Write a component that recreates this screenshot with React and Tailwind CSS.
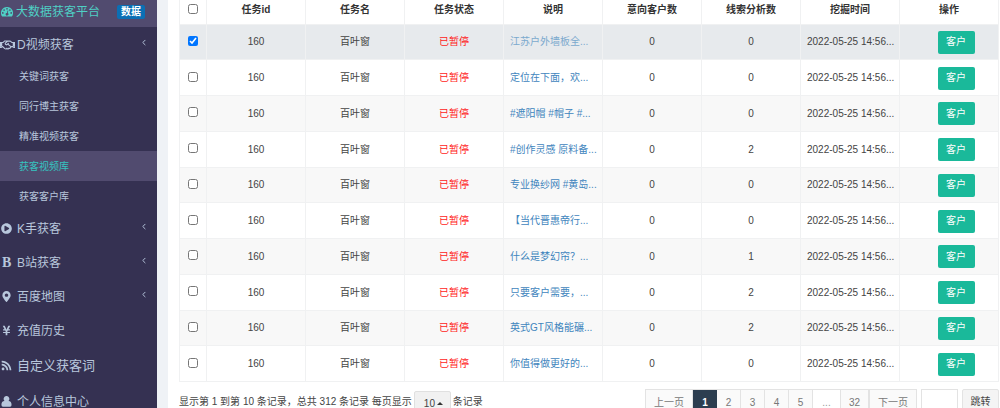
import React from 'react';
import { FaRegHandshake, FaPlayCircle, FaMapMarkerAlt, FaYenSign, FaRss } from 'react-icons/fa';

function GaugeIcon() {
    return (
        <svg viewBox="0 0 24 20" className="h-[10px] w-3" fill="currentColor">
            <path
                fillRule="evenodd"
                d="M12 0A12 12 0 0 0 1.9 18.5Q2.2 19 2.8 19H21.2Q21.8 19 22.1 18.5A12 12 0 0 0 12 0ZM3.6 10.2a1.7 1.7 0 1 1 0 3.4a1.7 1.7 0 0 1 0-3.4ZM6.2 4.3a1.7 1.7 0 1 1 0 3.4a1.7 1.7 0 0 1 0-3.4ZM12 1.8a1.7 1.7 0 1 1 0 3.4a1.7 1.7 0 0 1 0-3.4ZM17.8 4.3a1.7 1.7 0 1 1 0 3.4a1.7 1.7 0 0 1 0-3.4ZM20.4 10.2a1.7 1.7 0 1 1 0 3.4a1.7 1.7 0 0 1 0-3.4ZM13.2 6.8L14.7 7.2L13.5 12.2A2.7 2.7 0 1 1 11.8 11.8Z"
            />
        </svg>
    );
}

function UserIcon({ className }) {
    return (
        <svg viewBox="0 0 20 20" className={className} fill="currentColor">
            <path d="M10 0a5 5.4 0 0 1 3.6 9.3C17.5 9.6 19.2 12 19.2 16.2Q19.2 19.4 16.4 19.4H3.6Q.8 19.4 .8 16.2C.8 12 2.5 9.6 6.4 9.3A5 5.4 0 0 1 10 0Z" />
        </svg>
    );
}

function BoldIcon() {
    return <span className="ml-[2px] font-['Liberation_Serif',serif] text-sm font-bold">B</span>;
}

const menu = [
    {
        label: 'D视频获客',
        icon: FaRegHandshake,
        wide: true,
        arrow: true,
        children: ['关键词获客', '同行博主获客', '精准视频获客', '获客视频库', '获客客户库'],
    },
    { label: 'K手获客', icon: FaPlayCircle, arrow: true },
    { label: 'B站获客', icon: BoldIcon, arrow: true },
    { label: '百度地图', icon: FaMapMarkerAlt, arrow: true },
    { label: '充值历史', icon: FaYenSign },
    { label: '自定义获客词', icon: FaRss, large: true },
    { label: '个人信息中心', icon: UserIcon },
];

const columns = ['任务id', '任务名', '任务状态', '说明', '意向客户数', '线索分析数', '挖掘时间', '操作'];

const rows = [
    { desc: '江苏户外墙板全...', clues: 0, selected: true },
    { desc: '定位在下面，欢...', clues: 0 },
    { desc: '#遮阳帽 #帽子 #...', clues: 0 },
    { desc: '#创作灵感 原料备...', clues: 2 },
    { desc: '专业换纱网 #黄岛...', clues: 0 },
    { desc: '【当代晋惠帝行...', clues: 0 },
    { desc: '什么是梦幻帘？...', clues: 1 },
    { desc: '只要客户需要，...', clues: 2 },
    { desc: '英式GT风格能碾...', clues: 2 },
    { desc: '你值得做更好的...', clues: 0 },
];

const pages = ['上一页', '1', '2', '3', '4', '5', '...', '32', '下一页'];

function Sidebar() {
    return (
        <nav className="w-[157px] shrink-0 bg-[#353152] text-xs text-[#b8c7dc]">
            <a href="#" className="flex h-[27px] items-center bg-[#514b6f] pb-1 text-[#4fd0c5]">
                <span className="flex w-4 shrink-0 pl-px">
                    <GaugeIcon />
                </span>
                <span className="flex-1">大数据获客平台</span>
                <span className="mr-3 rounded-xs bg-[#0b6fb4] px-1 text-[10px] leading-[14px] font-bold text-white">数据</span>
            </a>
            {menu.map((item) => (
                <div key={item.label}>
                    <a href="#" className={item.large ? 'flex h-[37px] items-center text-[13px]' : 'flex h-[34px] items-center pt-px'}>
                        <span className="flex w-[17px] shrink-0 items-center">
                            <item.icon className={item.wide ? 'h-3 w-[15px]' : 'ml-px size-[11px]'} />
                        </span>
                        <span className="flex-1">{item.label}</span>
                        {item.arrow && (
                            <svg viewBox="0 0 5 8" className="mr-[11px] mb-1 h-[7px] w-[4px]" fill="none" stroke="currentColor">
                                <path d="M4.2 0.8L1 4L4.2 7.2" strokeWidth="1.2" />
                            </svg>
                        )}
                    </a>
                    {item.children?.map((child) => (
                        <a
                            key={child}
                            href="#"
                            className={
                                child === '获客视频库'
                                    ? 'flex h-[30px] items-center bg-[#514b6f] pt-px pl-[19px] text-[10px] text-[#35c4c0]'
                                    : 'flex h-[30px] items-center pt-px pl-[19px] text-[10px]'
                            }
                        >
                            {child}
                        </a>
                    ))}
                </div>
            ))}
        </nav>
    );
}

function TaskTable() {
    return (
        <table className="h-[382px] w-full table-fixed border-collapse text-center text-[10px] leading-4 text-[#444]">
            <thead>
                <tr className="h-6 text-[#333]">
                    <th className="w-[27px] border border-t-0 border-[#f0f1f2] pb-[6px] align-middle">
                        <input type="checkbox" aria-label="全选" className="mx-auto block size-[10px]" />
                    </th>
                    {columns.map((name) => (
                        <th key={name} className="border border-t-0 border-[#f0f1f2] pb-1 font-bold">{name}</th>
                    ))}
                </tr>
            </thead>
            <tbody>
                {rows.map((row, i) => (
                    <tr key={i} className={row.selected ? 'bg-[#e7eaed]' : i % 2 === 0 ? 'bg-[#f8f8f8]' : 'bg-white'}>
                        <td className="border border-[#f0f1f2] pb-[2px]">
                            <input type="checkbox" aria-label={row.desc} defaultChecked={row.selected} className="mx-auto block size-[10px]" />
                        </td>
                        <td className="border border-[#f0f1f2] pt-px">160</td>
                        <td className="border border-[#f0f1f2] pt-px">百叶窗</td>
                        <td className="border border-[#f0f1f2] pt-px text-[#ff1a1a]">已暂停</td>
                        <td className="border border-[#f0f1f2] pt-px pl-[6px] text-left whitespace-nowrap">
                            <a href="#" className={row.selected ? 'text-[#7ba9cd]' : 'text-[#3f85bd]'}>{row.desc}</a>
                        </td>
                        <td className="border border-[#f0f1f2] pt-px">0</td>
                        <td className="border border-[#f0f1f2] pt-px">{row.clues}</td>
                        <td className="border border-[#f0f1f2] pt-px pl-[6px] text-left whitespace-nowrap">2022-05-25 14:56...</td>
                        <td className="border border-[#f0f1f2] pt-px pl-[14px]">
                            <button type="button" className="mx-auto block h-[23px] w-[37px] rounded-xs bg-[#1ab99a] text-white">客户</button>
                        </td>
                    </tr>
                ))}
            </tbody>
        </table>
    );
}

function pageClass(page) {
    if (page === '1') return 'h-6 w-6 bg-[#2c3e50] font-bold text-white';
    if (page === '...') return 'h-6 w-7 border-r border-[#e3e3e3] bg-white text-[#999]';
    if (page === '32') return 'h-6 w-7 border-r border-[#e3e3e3] bg-[#fafafa]';
    if (page.length > 2) return 'h-6 w-12 border-x border-[#e3e3e3] bg-[#fafafa]';
    return 'h-6 w-6 border-r border-[#e3e3e3] bg-[#fafafa]';
}

function Footer() {
    return (
        <div className="flex justify-between pt-[7px] text-[10px] text-[#555]">
            <div className="flex items-start gap-[2px] pt-[2px] text-[#444]">
                <label htmlFor="page-size" className="leading-[22px]">显示第 1 到第 10 条记录，总共 312 条记录 每页显示</label>
                <span className="relative">
                    <select id="page-size" className="block h-6 w-[37px] appearance-none rounded-xs border border-[#e0e0e0] bg-[#f1f1f1] pl-[9px]">
                        <option>10</option>
                        <option>25</option>
                        <option>50</option>
                    </select>
                    <svg viewBox="0 0 6 3" className="pointer-events-none absolute top-[11px] right-[8px] h-[3px] w-[6px]">
                        <path d="M0 3L3 0L6 3Z" fill="#333" />
                    </svg>
                </span>
                <span className="leading-[22px]">条记录</span>
            </div>
            <div className="flex items-start gap-1">
                <div className="flex border-t border-[#e3e3e3] text-[#777]">
                    {pages.map((page) => (
                        <button key={page} type="button" className={pageClass(page)}>{page}</button>
                    ))}
                </div>
                <input type="text" aria-label="页码" className="h-6 w-[37px] border border-[#e3e3e3] bg-white px-1" />
                <button type="button" className="h-6 w-[37px] rounded-xs border border-[#e3e3e3] bg-[#f4f4f4] text-[#444]">跳转</button>
            </div>
        </div>
    );
}

export default function App() {
    return (
        <div className="flex h-screen overflow-hidden bg-[#eff2f6] font-['Liberation_Sans','Noto_Sans_CJK_SC',sans-serif]">
            <Sidebar />
            <main className="ml-[11px] min-w-0 flex-1 bg-white pr-px pl-[11px]">
                <TaskTable />
                <Footer />
            </main>
        </div>
    );
}
